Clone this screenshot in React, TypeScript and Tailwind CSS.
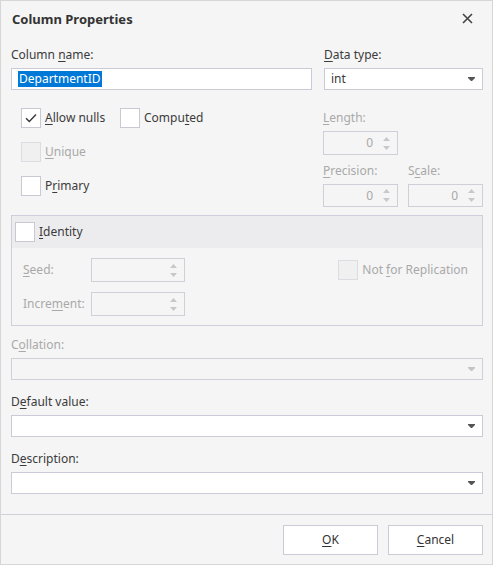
import React from 'react';

const font = { fontFamily: '"Noto Sans", "Open Sans", sans-serif' };

const Key = ({ children }: { children: React.ReactNode }) => (
  <u className="underline underline-offset-2 decoration-1">{children}</u>
);

const Arrow = ({ disabled = false }: { disabled?: boolean }) => (
  <svg width="7" height="4" viewBox="0 0 7 4" className="shrink-0">
    <path d="M0 0H7V1L4 4H3L0 1Z" fill={disabled ? '#c4c4c8' : '#555'} />
  </svg>
);

const Check = ({
  checked = false,
  disabled = false,
}: {
  checked?: boolean;
  disabled?: boolean;
}) => (
  <div
    className={
      'w-[20px] h-[20px] border flex items-center justify-center shrink-0 ' +
      (disabled ? 'border-[#dcdce2] bg-[#f0f0f0]' : 'border-[#c9c9d4] bg-white')
    }
  >
    {checked && (
      <svg width="12" height="10" viewBox="0 0 12 10">
        <path d="M1 5.2L4.3 8.5L11 1.5" fill="none" stroke="#333" strokeWidth="1.3" />
      </svg>
    )}
  </div>
);

const Spin = ({ value, className }: { value?: string; className: string }) => (
  <div className={'border border-[#cfcfda] flex items-center ' + className}>
    <span className="flex-1 text-right pr-[2px] text-[#a9a9a9]">{value}</span>
    <div className="w-[22px] flex flex-col items-center gap-[5px]">
      <svg width="7" height="4" viewBox="0 0 7 4">
        <path d="M0 4L3.5 0L7 4Z" fill="#c8c8cc" />
      </svg>
      <svg width="7" height="4" viewBox="0 0 7 4">
        <path d="M0 0L3.5 4L7 0Z" fill="#c8c8cc" />
      </svg>
    </div>
  </div>
);

export default function App() {
  return (
    <div
      className="w-[493px] h-[565px] bg-[#f5f5f5] border border-[#d6d6d6] text-[12px] text-[#3b3b3b] flex flex-col leading-[16px]"
      style={font}
    >
      {/* title */}
      <div className="h-[35px] flex items-center justify-between pl-[11px] pr-[19px]">
        <span className="font-bold text-[13px] text-[#333]">Column Properties</span>
        <svg width="11" height="11" viewBox="0 0 11 11">
          <path d="M1 1L10 10M10 1L1 10" stroke="#444" strokeWidth="1.6" />
        </svg>
      </div>

      <div className="pl-[10px] pr-[9px] flex flex-col">
        {/* name / type */}
        <div className="flex gap-[12px] mt-[11px]">
          <div className="w-[301px] flex flex-col gap-[5px]">
            <span>
              Column <Key>n</Key>ame:
            </span>
            <div className="h-[22px] border border-[#cbcbd8] bg-white flex items-center px-[6px]">
              <span className="bg-[#0078d7] text-white px-[1px]">DepartmentID</span>
            </div>
          </div>
          <div className="flex-1 flex flex-col gap-[5px]">
            <span>
              <Key>D</Key>ata type:
            </span>
            <div className="h-[22px] border border-[#cbcbd8] bg-white flex items-center justify-between pl-[6px] pr-[7px]">
              <span>int</span>
              <Arrow />
            </div>
          </div>
        </div>

        {/* options */}
        <div className="flex">
          <div className="flex-1 pl-[10px] pt-[18px] flex flex-col gap-[14px]">
            <div className="flex items-center">
              <Check checked />
              <span className="ml-[4px] w-[75px]">
                <Key>A</Key>llow nulls
              </span>
              <Check />
              <span className="ml-[4px]">
                Compu<Key>t</Key>ed
              </span>
            </div>
            <div className="flex items-center">
              <Check disabled />
              <span className="ml-[4px] text-[#a9a9a9]">
                <Key>U</Key>nique
              </span>
            </div>
            <div className="flex items-center">
              <Check />
              <span className="ml-[4px]">
                P<Key>r</Key>imary
              </span>
            </div>
          </div>
          <div className="w-[160px] pt-[20px] flex flex-col text-[#a9a9a9]">
            <span>
              <Key>L</Key>ength:
            </span>
            <Spin value="0" className="mt-[5px] w-[75px] h-[24px]" />
            <div className="flex gap-[10px] mt-[8px]">
              <div className="flex flex-col gap-[5px]">
                <span>
                  <Key>P</Key>recision:
                </span>
                <Spin value="0" className="w-[75px] h-[23px]" />
              </div>
              <div className="flex flex-col gap-[5px]">
                <span>
                  S<Key>c</Key>ale:
                </span>
                <Spin value="0" className="w-[75px] h-[23px]" />
              </div>
            </div>
          </div>
        </div>

        {/* identity group */}
        <div className="mt-[8px] h-[111px] border border-[#cfcfdb] flex flex-col">
          <div className="h-[32px] bg-[#ececef] flex items-center pl-[3px]">
            <Check />
            <span className="ml-[4px]">
              <Key>I</Key>dentity
            </span>
          </div>
          <div className="flex pl-[11px] pr-[14px] pt-[10px] text-[#a9a9a9]">
            <div className="flex flex-col gap-[10px]">
              <div className="flex items-center">
                <span className="w-[68px]">
                  <Key>S</Key>eed:
                </span>
                <Spin className="w-[94px] h-[24px]" />
              </div>
              <div className="flex items-center">
                <span className="w-[68px]">
                  Incre<Key>m</Key>ent:
                </span>
                <Spin className="w-[94px] h-[24px]" />
              </div>
            </div>
            <div className="flex-1" />
            <div className="flex items-start pt-[2px]">
              <Check disabled />
              <span className="ml-[4px] leading-[20px]">
                Not <Key>f</Key>or Replication
              </span>
            </div>
          </div>
        </div>

        {/* collation */}
        <div className="mt-[11px] flex flex-col gap-[5px]">
          <span className="text-[#a9a9a9]">
            C<Key>o</Key>llation:
          </span>
          <div className="h-[22px] border border-[#cfcfda] flex items-center justify-end pr-[7px]">
            <Arrow disabled />
          </div>
        </div>

        {/* default value */}
        <div className="mt-[14px] flex flex-col gap-[5px]">
          <span>
            D<Key>e</Key>fault value:
          </span>
          <div className="h-[22px] border border-[#cbcbd8] bg-white flex items-center justify-end pr-[7px]">
            <Arrow />
          </div>
        </div>

        {/* description */}
        <div className="mt-[14px] flex flex-col gap-[5px]">
          <span>
            D<Key>e</Key>scription:
          </span>
          <div className="h-[22px] border border-[#cbcbd8] bg-white flex items-center justify-end pr-[7px]">
            <Arrow />
          </div>
        </div>
      </div>

      {/* footer */}
      <div className="mt-[20px] border-t border-[#cfcfda] flex-1 flex items-start justify-end gap-[10px] pt-[10px] pr-[9px]">
        <button className="w-[95px] h-[30px] border border-[#cbcbd8] bg-white text-[#333]" style={font}>
          <Key>O</Key>K
        </button>
        <button className="w-[95px] h-[30px] border border-[#cbcbd8] bg-white text-[#333]" style={font}>
          <Key>C</Key>ancel
        </button>
      </div>
    </div>
  );
}
